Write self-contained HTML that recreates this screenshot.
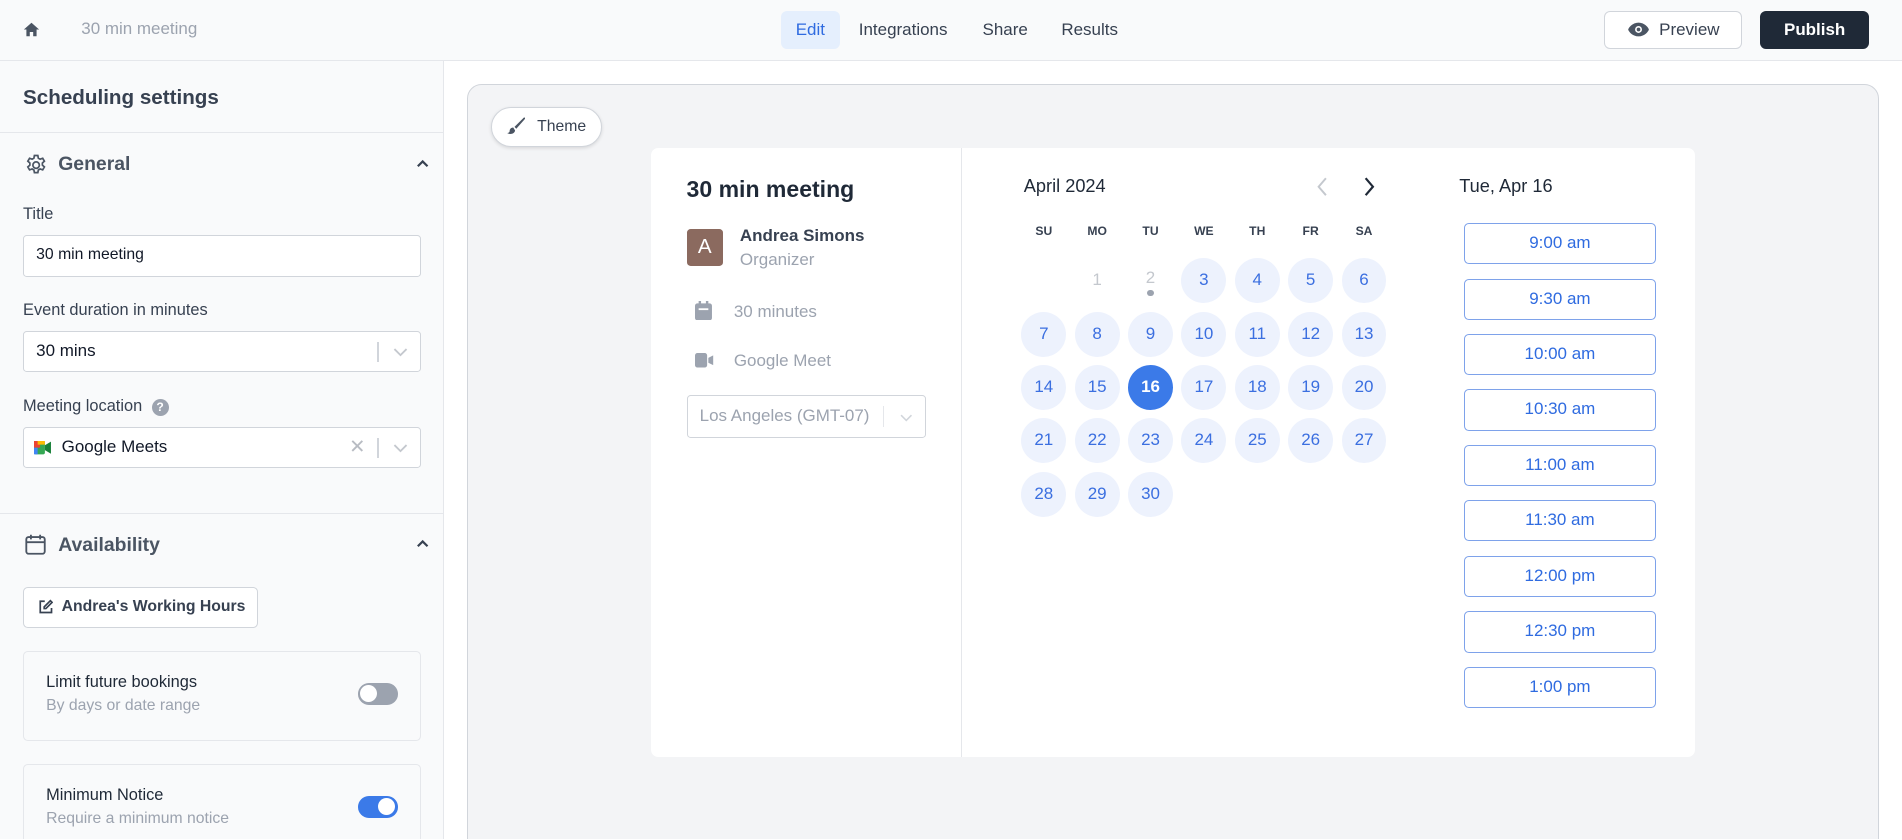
<!DOCTYPE html>
<html><head><meta charset="utf-8"><style>
*{box-sizing:border-box;margin:0;padding:0}
html,body{width:1902px;height:840px;overflow:hidden;background:#fff}
body{font-family:"Liberation Sans",sans-serif;color:#374151}
#r{zoom:1.2130;width:1568px;height:692px;position:relative;overflow:hidden}
.a{position:absolute}
.top{left:0;top:0;width:1568px;height:50px;background:#f9fafb;border-bottom:1px solid #e5e7eb}
.tab{top:9px;height:31px;line-height:31px;font-size:14px;color:#374151;padding:0 12px;border-radius:5px}
.side{left:0;top:50px;width:366px;height:642px;background:#f9fafb;border-right:1px solid #e5e7eb}
.lbl{font-size:13.5px;color:#374151;left:19px}
.inp{left:19px;width:328px;height:34px;background:#fff;border:1px solid #d1d5db;border-radius:3px;font-size:13px;color:#111827;padding-left:10px;line-height:32px}
.sep{position:absolute;right:34px;top:8px;width:1px;height:17px;background:#d1d5db}
.chev{position:absolute;right:9px;top:9px}
.card{left:19px;width:328px;background:#f9fafb;border:1px solid #e5e7eb;border-radius:4px}
.tg{width:33px;height:18px;border-radius:9px;position:absolute}
.tg i{position:absolute;top:2px;width:14px;height:14px;border-radius:7px;background:#fff}
.d{position:absolute;width:37px;height:37px;border-radius:50%;background:#edf2fd;color:#3b6fe0;font-size:14px;text-align:center;line-height:37px}
.h{position:absolute;width:37px;text-align:center;font-size:10px;font-weight:bold;color:#374151;top:185px}
.sl{position:absolute;left:1207px;width:158px;height:34px;border:1px solid #7ea2ea;border-radius:4px;color:#2f6be0;font-size:14px;text-align:center;line-height:32px}
</style></head><body><div id="r">
<div class="a top"></div>
<svg class="a" style="left:19px;top:17px" width="14" height="14" viewBox="0 0 20 20"><path d="M10 2L1 10h3v8h4v-5h4v5h4v-8h3z" fill="#4b5563"/></svg>
<div class="a" style="left:67px;top:16px;font-size:14px;color:#9ca3af">30 min meeting</div>
<div class="a tab" style="left:644px;background:#e5effd;color:#2f6be0">Edit</div>
<div class="a tab" style="left:696px">Integrations</div>
<div class="a tab" style="left:798px">Share</div>
<div class="a tab" style="left:863px">Results</div>
<div class="a" style="left:1322px;top:9px;width:114px;height:31px;border:1px solid #d1d5db;border-radius:5px;background:#fff;font-size:14px;color:#374151;line-height:29px;padding-left:45px">Preview</div>
<svg class="a" style="left:1341px;top:17px" width="19" height="14" viewBox="0 0 20 14"><path d="M10 1C5 1 1.5 5 1 7c.5 2 4 6 9 6s8.5-4 9-6c-.5-2-4-6-9-6z" fill="#4b5563"/><circle cx="10" cy="7" r="3" fill="#fff"/><circle cx="10" cy="7" r="1.6" fill="#4b5563"/></svg>
<div class="a" style="left:1451px;top:9px;width:90px;height:31px;border-radius:5px;background:#1f2937;color:#fff;font-size:14px;font-weight:bold;text-align:center;line-height:31px">Publish</div>

<div class="a side"></div>
<div class="a" style="left:19px;top:71px;font-size:17px;font-weight:bold;color:#374151">Scheduling settings</div>
<div class="a" style="left:0;top:109px;width:365px;height:1px;background:#e5e7eb"></div>
<svg class="a" style="left:20px;top:126px" width="20" height="20" viewBox="0 0 24 24" fill="none" stroke="#4b5563" stroke-width="1.7"><path d="M10.3 2.5h3.4l.5 2.6 1.8 1 2.5-.9 1.7 2.9-2 1.8v2.1l2 1.8-1.7 2.9-2.5-.9-1.8 1-.5 2.6h-3.4l-.5-2.6-1.8-1-2.5.9-1.7-2.9 2-1.8v-2.1l-2-1.8 1.7-2.9 2.5.9 1.8-1z"/><circle cx="12" cy="12" r="3.2"/></svg>
<div class="a" style="left:48px;top:126px;font-size:16px;font-weight:bold;color:#4b5563">General</div>
<svg class="a" style="left:343px;top:131px" width="11" height="8" viewBox="0 0 11 8"><path d="M1.5 6L5.5 2l4 4" fill="none" stroke="#374151" stroke-width="1.8"/></svg>
<div class="a lbl" style="top:169px">Title</div>
<div class="a inp" style="top:194px">30 min meeting</div>
<div class="a lbl" style="top:248px">Event duration in minutes</div>
<div class="a inp" style="top:273px;font-size:14px">30 mins<span class="sep"></span><svg class="chev" width="14" height="14" viewBox="0 0 14 14"><path d="M2 5l5 5 5-5" fill="none" stroke="#c4c8ce" stroke-width="1.5"/></svg></div>
<div class="a lbl" style="top:327px">Meeting location</div>
<div class="a" style="left:125px;top:329px;width:14px;height:14px;border-radius:7px;background:#9ca3af;color:#fff;font-size:10px;font-weight:bold;text-align:center;line-height:14px">?</div>
<div class="a inp" style="top:352px;font-size:14px;padding-left:31px">Google Meets<span class="sep"></span><svg class="chev" width="14" height="14" viewBox="0 0 14 14"><path d="M2 5l5 5 5-5" fill="none" stroke="#c4c8ce" stroke-width="1.5"/></svg><span style="position:absolute;right:45px;top:0;color:#b8bcc3;font-size:16px">✕</span>
<svg style="position:absolute;left:8px;top:11px" width="14" height="11" viewBox="0 0 14 11"><rect x="0" y="0" width="9" height="11" rx="1.5" fill="#34a853"/><rect x="0" y="0" width="5" height="5.5" fill="#ea4335"/><rect x="0" y="5.5" width="3" height="5.5" fill="#4285f4"/><rect x="3" y="0" width="6" height="3" fill="#fbbc04"/><path d="M9 3.5l5-3v10l-5-3z" fill="#188038"/></svg></div>
<div class="a" style="left:0;top:423px;width:365px;height:1px;background:#e5e7eb"></div>
<svg class="a" style="left:20px;top:439px" width="19" height="19" viewBox="0 0 20 20" fill="none" stroke="#4b5563" stroke-width="1.6"><rect x="2" y="3.5" width="16" height="14.5" rx="2"/><path d="M2 8h16M6 1.5v4M14 1.5v4"/></svg>
<div class="a" style="left:48px;top:440px;font-size:16px;font-weight:bold;color:#4b5563">Availability</div>
<svg class="a" style="left:343px;top:444px" width="11" height="8" viewBox="0 0 11 8"><path d="M1.5 6L5.5 2l4 4" fill="none" stroke="#374151" stroke-width="1.8"/></svg>
<div class="a" style="left:19px;top:484px;width:194px;height:34px;background:#fff;border:1px solid #d1d5db;border-radius:4px;font-size:13px;font-weight:bold;color:#374151;line-height:32px;padding-left:31px">Andrea's Working Hours</div>
<svg class="a" style="left:31px;top:494px" width="13" height="13" viewBox="0 0 14 14" fill="none" stroke="#374151" stroke-width="1.5"><path d="M6 2H2v10h10V8"/><path d="M11 1.5l1.5 1.5L7 8.5H5.5V7z"/></svg>
<div class="a card" style="top:537px;height:74px"></div>
<div class="a" style="left:38px;top:555px;font-size:13.5px;color:#1f2937">Limit future bookings</div>
<div class="a" style="left:38px;top:575px;font-size:13px;color:#9ca3af">By days or date range</div>
<div class="a tg" style="left:295px;top:563px;background:#9ca3af"><i style="left:2px"></i></div>
<div class="a card" style="top:630px;height:80px"></div>
<div class="a" style="left:38px;top:648px;font-size:13.5px;color:#1f2937">Minimum Notice</div>
<div class="a" style="left:38px;top:668px;font-size:13px;color:#9ca3af">Require a minimum notice</div>
<div class="a tg" style="left:295px;top:656px;background:#3b7ae8"><i style="left:17px"></i></div>

<div class="a" style="left:385px;top:69px;width:1164px;height:640px;background:#f3f4f6;border:1px solid #d1d5db;border-radius:12px"></div>
<div class="a" style="left:405px;top:88px;width:91px;height:33px;background:#fff;border:1px solid #d1d5db;border-radius:17px;box-shadow:0 1px 3px rgba(0,0,0,.12);font-size:13px;color:#374151;line-height:31px;padding-left:37px">Theme</div>
<svg class="a" style="left:417px;top:96px" width="16" height="16" viewBox="0 0 16 16"><path d="M15 1L7 9l1.5 1.5L16 2z M6 9.5c-2 0-3 1.5-3 3 0 1-1 1.5-2 1.5 2 1.5 6 1 6.5-2z" fill="#4b5563"/></svg>
<div class="a" style="left:537px;top:122px;width:860px;height:502px;background:#fff;border-radius:6px"></div>
<div class="a" style="left:792px;top:122px;width:1px;height:502px;background:#e5e7eb"></div>
<div class="a" style="left:566px;top:145px;font-size:19px;font-weight:bold;color:#1f2937">30 min meeting</div>
<div class="a" style="left:566px;top:189px;width:30px;height:30px;border-radius:3px;background:#8b6a5f;color:#fff;font-size:17px;text-align:center;line-height:30px">A</div>
<div class="a" style="left:610px;top:186px;font-size:14px;font-weight:bold;color:#374151">Andrea Simons</div>
<div class="a" style="left:610px;top:206px;font-size:14px;color:#9ca3af">Organizer</div>
<svg class="a" style="left:573px;top:248px" width="14" height="16" viewBox="0 0 14 16"><rect x="0" y="2" width="14" height="14" rx="2" fill="#9ca3af"/><rect x="3" y="0" width="2" height="4" fill="#9ca3af"/><rect x="9" y="0" width="2" height="4" fill="#9ca3af"/><rect x="3" y="6" width="8" height="1.5" fill="#fff"/></svg>
<div class="a" style="left:605px;top:249px;font-size:14px;color:#9ca3af">30 minutes</div>
<svg class="a" style="left:573px;top:291px" width="16" height="12" viewBox="0 0 16 12"><rect x="0" y="0" width="10" height="12" rx="2" fill="#9ca3af"/><path d="M11 4l4-2v8l-4-2z" fill="#9ca3af"/></svg>
<div class="a" style="left:605px;top:289px;font-size:14px;color:#9ca3af">Google Meet</div>
<div class="a" style="left:566px;top:326px;width:197px;height:35px;border:1px solid #d1d5db;border-radius:3px;font-size:14px;color:#9ca3af;line-height:33px;padding-left:10px">Los Angeles (GMT-07)<span style="position:absolute;right:33px;top:8px;width:1px;height:17px;background:#e5e7eb"></span><svg style="position:absolute;right:9px;top:11px" width="12" height="12" viewBox="0 0 14 14"><path d="M2 5l5 5 5-5" fill="none" stroke="#d1d5db" stroke-width="1.5"/></svg></div>

<div class="a" style="left:844px;top:145px;font-size:15px;color:#1f2937">April 2024</div>
<svg class="a" style="left:1084px;top:146px" width="12" height="16" viewBox="0 0 12 16"><path d="M9 1L3 8l6 7" fill="none" stroke="#c4c8ce" stroke-width="1.6"/></svg>
<svg class="a" style="left:1123px;top:146px" width="12" height="16" viewBox="0 0 12 16"><path d="M3 1l6 7-6 7" fill="none" stroke="#1f2937" stroke-width="1.8"/></svg>
<div class="h" style="left:842px">SU</div><div class="h" style="left:886px">MO</div><div class="h" style="left:930px">TU</div><div class="h" style="left:974px">WE</div><div class="h" style="left:1018px">TH</div><div class="h" style="left:1062px">FR</div><div class="h" style="left:1106px">SA</div>
<div class="d" style="left:886px;top:213px;background:none;color:#c4c8ce">1</div>
<div class="d" style="left:930px;top:211px;background:none;color:#c4c8ce">2</div>
<div class="a" style="left:946px;top:239px;width:5px;height:5px;border-radius:50%;background:#9ca3af"></div>
<div class="d" style="left:974px;top:213px">3</div><div class="d" style="left:1018px;top:213px">4</div><div class="d" style="left:1062px;top:213px">5</div><div class="d" style="left:1106px;top:213px">6</div>
<div class="d" style="left:842px;top:257px">7</div><div class="d" style="left:886px;top:257px">8</div><div class="d" style="left:930px;top:257px">9</div><div class="d" style="left:974px;top:257px">10</div><div class="d" style="left:1018px;top:257px">11</div><div class="d" style="left:1062px;top:257px">12</div><div class="d" style="left:1106px;top:257px">13</div>
<div class="d" style="left:842px;top:301px">14</div><div class="d" style="left:886px;top:301px">15</div><div class="d" style="left:930px;top:301px;background:#3b7ae8;color:#fff;font-weight:bold">16</div><div class="d" style="left:974px;top:301px">17</div><div class="d" style="left:1018px;top:301px">18</div><div class="d" style="left:1062px;top:301px">19</div><div class="d" style="left:1106px;top:301px">20</div>
<div class="d" style="left:842px;top:345px">21</div><div class="d" style="left:886px;top:345px">22</div><div class="d" style="left:930px;top:345px">23</div><div class="d" style="left:974px;top:345px">24</div><div class="d" style="left:1018px;top:345px">25</div><div class="d" style="left:1062px;top:345px">26</div><div class="d" style="left:1106px;top:345px">27</div>
<div class="d" style="left:842px;top:389px">28</div><div class="d" style="left:886px;top:389px">29</div><div class="d" style="left:930px;top:389px">30</div>

<div class="a" style="left:1203px;top:145px;font-size:15px;color:#1f2937">Tue, Apr 16</div>
<div class="sl" style="top:184px">9:00 am</div>
<div class="sl" style="top:230px">9:30 am</div>
<div class="sl" style="top:275px">10:00 am</div>
<div class="sl" style="top:321px">10:30 am</div>
<div class="sl" style="top:367px">11:00 am</div>
<div class="sl" style="top:412px">11:30 am</div>
<div class="sl" style="top:458px">12:00 pm</div>
<div class="sl" style="top:504px">12:30 pm</div>
<div class="sl" style="top:550px">1:00 pm</div>
</div></body></html>
